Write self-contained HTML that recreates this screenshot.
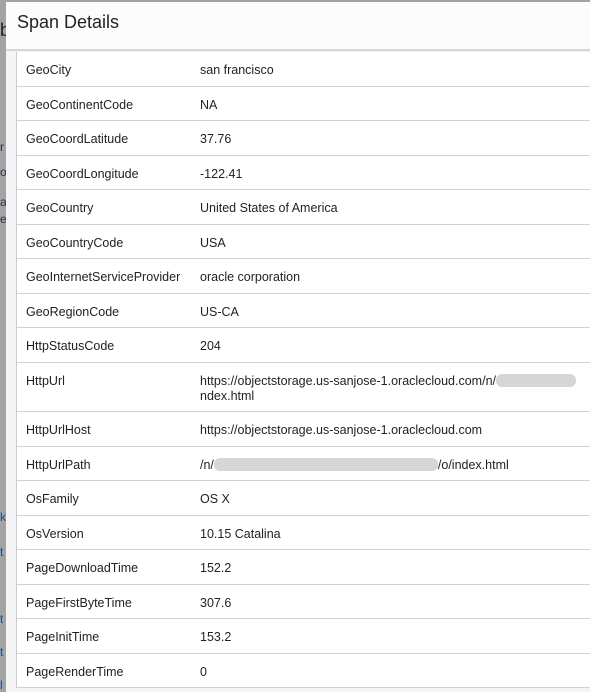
<!DOCTYPE html>
<html><head><style>
body{margin:0;width:590px;height:692px;overflow:hidden;background:#a3a3a3;font-family:"Liberation Sans",Arial,sans-serif;position:relative}
.dlg{position:absolute;left:6px;top:2px;right:0;bottom:0;background:#f4f4f6}
.hdr{position:absolute;left:0;top:0;right:0;height:47px;background:#fcfcfc;border-bottom:2px solid #d3d5d9}
.hdr span{position:absolute;left:11px;top:10px;font-size:18px;color:#222}
.tbl{position:absolute;left:10px;top:50px;right:0;background:#fff;border-left:1px solid #c9ccd2}
.r{position:relative;height:33.5px;border-bottom:1px solid #cfd2d8;font-size:12.5px;color:#222}
.r .k{position:absolute;left:9px;top:11px}
.r .v{position:absolute;left:183px;top:11px;line-height:15px;white-space:nowrap}
.blur{display:inline-block;background:#d6d6d6;border-radius:6px;height:13px;vertical-align:-2px}
.frag{position:absolute;left:0;width:6px;color:#234;font-size:12px;overflow:hidden}
</style></head><body>
<div class="frag" style="top:20px;font-size:18px;color:#222">b</div>
<div class="frag" style="top:140px">r</div>
<div class="frag" style="top:165px">o</div>
<div class="frag" style="top:195px">a</div>
<div class="frag" style="top:212px">e</div>
<div class="frag" style="top:510px;color:#1a4f8a">k</div>
<div class="frag" style="top:545px;color:#1a4f8a">t</div>
<div class="frag" style="top:612px;color:#1a4f8a">t</div>
<div class="frag" style="top:645px;color:#1a4f8a">t</div>
<div class="frag" style="top:678px;color:#1a4f8a">l</div>
<div class="dlg">
<div class="hdr"><span>Span Details</span></div>
<div class="tbl">
<div class="r"><span class="k">GeoCity</span><span class="v">san francisco</span></div>
<div class="r"><span class="k">GeoContinentCode</span><span class="v">NA</span></div>
<div class="r"><span class="k">GeoCoordLatitude</span><span class="v">37.76</span></div>
<div class="r"><span class="k">GeoCoordLongitude</span><span class="v">-122.41</span></div>
<div class="r"><span class="k">GeoCountry</span><span class="v">United States of America</span></div>
<div class="r"><span class="k">GeoCountryCode</span><span class="v">USA</span></div>
<div class="r"><span class="k">GeoInternetServiceProvider</span><span class="v">oracle corporation</span></div>
<div class="r"><span class="k">GeoRegionCode</span><span class="v">US-CA</span></div>
<div class="r"><span class="k">HttpStatusCode</span><span class="v">204</span></div>
<div class="r" style="height:48.5px"><span class="k">HttpUrl</span><span class="v">https://objectstorage.us-sanjose-1.oraclecloud.com/n/<span class="blur" style="width:80px"></span><br>ndex.html</span></div>
<div class="r"><span class="k">HttpUrlHost</span><span class="v">https://objectstorage.us-sanjose-1.oraclecloud.com</span></div>
<div class="r"><span class="k">HttpUrlPath</span><span class="v">/n/<span class="blur" style="width:224px"></span>/o/index.html</span></div>
<div class="r"><span class="k">OsFamily</span><span class="v">OS X</span></div>
<div class="r"><span class="k">OsVersion</span><span class="v">10.15 Catalina</span></div>
<div class="r"><span class="k">PageDownloadTime</span><span class="v">152.2</span></div>
<div class="r"><span class="k">PageFirstByteTime</span><span class="v">307.6</span></div>
<div class="r"><span class="k">PageInitTime</span><span class="v">153.2</span></div>
<div class="r"><span class="k">PageRenderTime</span><span class="v">0</span></div>
</div>
</div>
</body></html>
